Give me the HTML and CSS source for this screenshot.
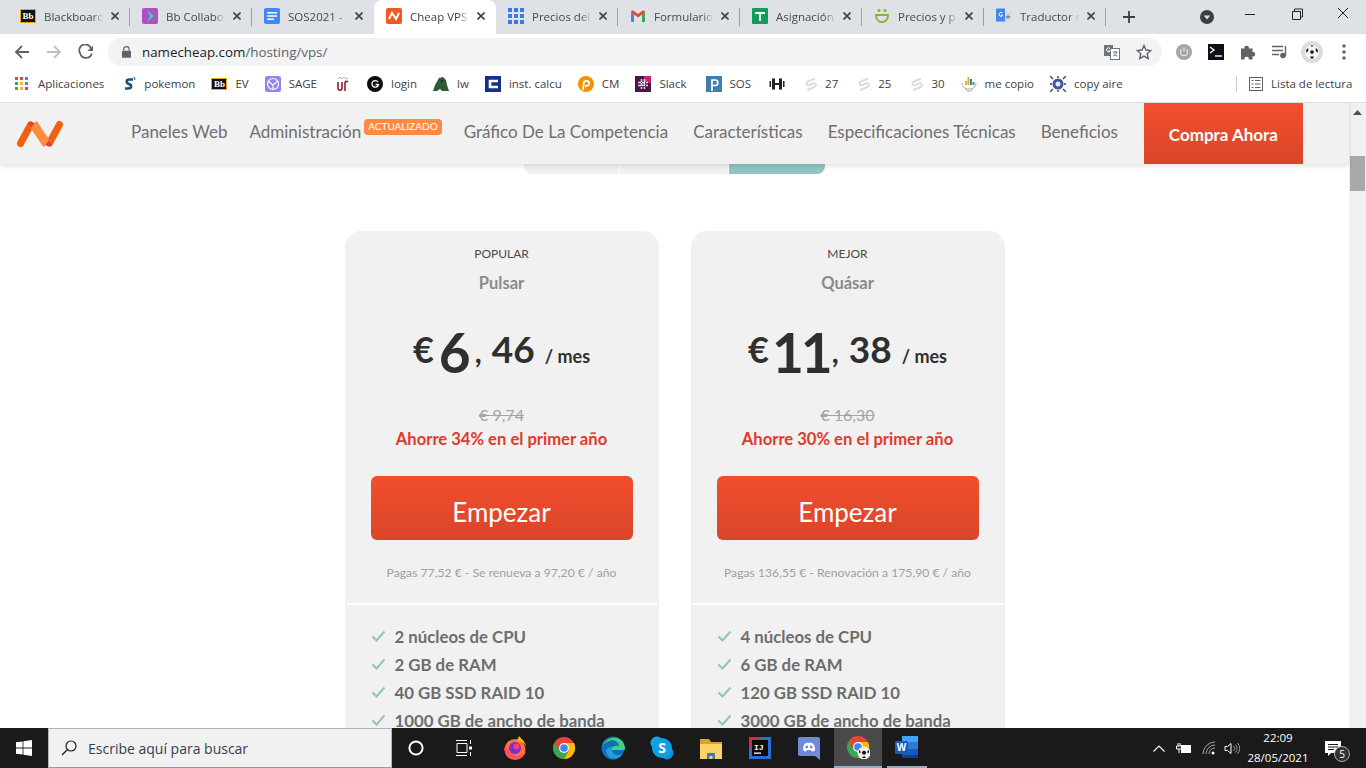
FILE: index.html
```html
<!DOCTYPE html>
<html lang="es">
<head>
<meta charset="utf-8">
<title>Cheap VPS</title>
<link rel="stylesheet" href="styles.css">
</head>
<body>
<div class="screen">
  <div class="tabstrip">
    <div class="tab sep"><svg class="fav" viewBox="0 0 16 16"><rect x=".5" y="1.5" width="15" height="13" fill="#111" stroke="#e8a917"/></svg><span class="bbmark">Bb</span><span class="title">Blackboard</span><svg class="x" viewBox="0 0 8 8"><path d="M.5.500l7 7M7.500.500l-7 7" stroke="#3c4043" stroke-width="1.600"/></svg></div>
    <div class="tab sep"><svg class="fav" viewBox="0 0 16 16"><rect width="16" height="16" rx="2" fill="#b04fc0"/><path d="M5 2l7 6-7 6 3-6z" fill="#35d6c0"/></svg><span class="title">Bb Collabo</span><svg class="x" viewBox="0 0 8 8"><path d="M.5.500l7 7M7.500.500l-7 7" stroke="#3c4043" stroke-width="1.600"/></svg></div>
    <div class="tab"><svg class="fav" viewBox="0 0 16 16"><rect width="16" height="16" rx="2" fill="#4285f4"/><path d="M3 4h10v1.600H3zM3 7.200h10v1.600H3zM3 10.400h7V12H3z" fill="#fff"/></svg><span class="title">SOS2021 -</span><svg class="x" viewBox="0 0 8 8"><path d="M.5.500l7 7M7.500.500l-7 7" stroke="#3c4043" stroke-width="1.600"/></svg></div>
    <div class="tab active"><svg class="fav" viewBox="0 0 16 16"><rect width="16" height="16" rx="2" fill="#ee5a1f"/><path d="M3 11l3-6 4 6 3-6" fill="none" stroke="#fff" stroke-width="2"/></svg><span class="title">Cheap VPS</span><svg class="x" viewBox="0 0 8 8"><path d="M.5.500l7 7M7.500.500l-7 7" stroke="#3c4043" stroke-width="1.600"/></svg></div>
    <div class="tab sep"><svg class="fav" viewBox="0 0 16 16"><path d="M0 0h4v4H0zM6 0h4v4H6zM12 0h4v4h-4zM0 6h4v4H0zM6 6h4v4H6zM12 6h4v4h-4zM0 12h4v4H0zM6 12h4v4H6zM12 12h4v4h-4z" fill="#3b78f0"/></svg><span class="title">Precios del</span><svg class="x" viewBox="0 0 8 8"><path d="M.5.500l7 7M7.500.500l-7 7" stroke="#3c4043" stroke-width="1.600"/></svg></div>
    <div class="tab sep"><svg class="fav" viewBox="0 0 16 16"><path d="M1 14V4l3 2v8H2a1 1 0 01-1-1z" fill="#4285f4"/><path d="M12 14V6l3-2v10h-3z" fill="#34a853"/><path d="M1 4c0-1.500 2-2 3-1l4 3 4-3c1-1 3-.5 3 1L12 6.500 8 9.500 4 6.500z" fill="#ea4335"/></svg><span class="title">Formulario</span><svg class="x" viewBox="0 0 8 8"><path d="M.5.500l7 7M7.500.500l-7 7" stroke="#3c4043" stroke-width="1.600"/></svg></div>
    <div class="tab sep"><svg class="fav" viewBox="0 0 16 16"><rect width="16" height="16" rx="1" fill="#0f9d58"/><path d="M3 4h10v2H9v7H7V6H3z" fill="#fff"/></svg><span class="title">Asignación</span><svg class="x" viewBox="0 0 8 8"><path d="M.5.500l7 7M7.500.500l-7 7" stroke="#3c4043" stroke-width="1.600"/></svg></div>
    <div class="tab sep"><svg class="fav" viewBox="0 0 16 16"><circle cx="5" cy="2.500" r="1.500" fill="#80b83a"/><circle cx="11" cy="2.500" r="1.500" fill="#80b83a"/><path d="M2 7h12c0 5-3 7-6 7s-6-2-6-7z" fill="none" stroke="#80b83a" stroke-width="2"/></svg><span class="title">Precios y p</span><svg class="x" viewBox="0 0 8 8"><path d="M.5.500l7 7M7.500.500l-7 7" stroke="#3c4043" stroke-width="1.600"/></svg></div>
    <div class="tab sep"><svg class="fav" viewBox="0 0 16 16"><rect x="6" y="4" width="10" height="11" fill="#dadce0"/><path d="M0 1.500a1 1 0 011-1h8v13H1a1 1 0 01-1-1z" fill="#4285f4"/><path d="M12 6l.8 2h2l-1.600 1.200.6 2-1.800-1.200-1.800 1.200.6-2L9.200 8h2z" fill="#80868b"/><path d="M6.500 5a2 2 0 10.300 2.300H4.800" fill="none" stroke="#fff"/></svg><span class="title">Traductor d</span><svg class="x" viewBox="0 0 8 8"><path d="M.5.500l7 7M7.500.500l-7 7" stroke="#3c4043" stroke-width="1.600"/></svg></div>
    <svg class="plus" viewBox="0 0 14 14"><path d="M7 1v12M1 7h12" stroke="#3c4043" stroke-width="1.800"/></svg>
    <div class="tabtools">
      <svg class="tabsearch" viewBox="0 0 14 14"><circle cx="7" cy="7" r="7" fill="#3c4043"/><path d="M3.800 5.500h6.400L7 9.500z" fill="#dee1e6"/></svg>
      <div class="wins">
        <svg class="win" viewBox="0 0 46 20"><path d="M17 10.500h10" stroke="#222" stroke-width="1"/></svg>
        <svg class="win" viewBox="0 0 46 20"><path d="M18.500 7.500h8v8h-8zM20.500 7.500v-2.500h8v8h-2" fill="none" stroke="#222"/></svg>
        <svg class="win" viewBox="0 0 46 20"><path d="M18 4l10 10M28 4L18 14" stroke="#222"/></svg>
      </div>
    </div>
  </div>

  <div class="toolbar">
    <svg class="nav-ic" viewBox="0 0 16 16"><path d="M15 8H2M8 2L2 8l6 6" fill="none" stroke="#5f6368" stroke-width="1.800"/></svg>
    <svg class="nav-ic" viewBox="0 0 16 16"><path d="M1 8h13M8 2l6 6-6 6" fill="none" stroke="#bdc1c6" stroke-width="1.800"/></svg>
    <svg class="nav-ic" viewBox="0 0 16 16"><path d="M13 4.500A6 6 0 102.200 9.500 6 6 0 0013.800 9.500" fill="none" stroke="#5f6368" stroke-width="1.800"/><path d="M15 1.500v5.500H9.500z" fill="#5f6368"/></svg>
    <div class="omnibox">
      <svg class="lock" viewBox="0 0 10 13"><path d="M2 5V3.500a3 3 0 016 0V5" fill="none" stroke="#5f6368" stroke-width="1.300"/><rect y="5" width="10" height="8" rx="1" fill="#5f6368"/></svg>
      <span class="url"><span class="host">namecheap.com</span>/hosting/vps/</span>
      <svg class="omni-tr" viewBox="0 0 16 16"><rect y="1" width="9" height="11" fill="#70757a"/><rect x="6.500" y="4.500" width="9" height="11" fill="#fff" stroke="#70757a"/><path d="M9 8h4.500M11 7v1M12.500 8c0 2-2 4-3.500 4M10 9.500c1 1.500 2 2 3.500 2.500" stroke="#70757a" fill="none"/><path d="M6 4.500a2 2 0 10.300 2.300H4.300" fill="none" stroke="#fff"/></svg>
      <svg class="omni-star" viewBox="0 0 16 16"><path d="M8 1.500l2 4.500 4.800.500-3.600 3.200 1 4.800L8 12.100l-4.200 2.400 1-4.800L1.200 6.500 6 6z" fill="none" stroke="#5f6368" stroke-width="1.400"/></svg>
    </div>
    <div class="ext">
      <svg class="ext-power" viewBox="0 0 16 16"><circle cx="8" cy="8" r="8" fill="#a6a6a6"/><path d="M5.500 5.500a3.600 3.600 0 105 0M8 3.500v4" fill="none" stroke="#e6e6e6" stroke-width="1.300"/></svg>
      <svg class="ext-term" viewBox="0 0 16 16"><rect width="16" height="16" fill="#0c0f16"/><path d="M2 3l4 3-4 3" fill="none" stroke="#fff" stroke-width="1.400"/><path d="M7 12h7" stroke="#fff" stroke-width="1.400"/></svg>
      <svg class="ext-puzzle" viewBox="0 0 16 16"><path d="M1 4.500h3.500a2.200 2.200 0 114.300 0H12.500V8a2.200 2.200 0 110 4.300V15.500H8.800a2.200 2.200 0 10-4.300 0H1z" fill="#5f6368"/></svg>
      <svg class="ext-music" viewBox="0 0 16 16"><path d="M0 2.500h11M0 6.500h11M0 10.500h7M13.500 2v9.500" fill="none" stroke="#5f6368" stroke-width="1.400"/><circle cx="11" cy="11.500" r="2.800" fill="#5f6368"/></svg>
      <svg class="avatar" viewBox="0 0 22 22"><circle cx="11" cy="11" r="11" fill="#dcdcdc"/><circle cx="11" cy="11" r="7" fill="#f6f6f6"/><path d="M11 9l2 1.500-.8 2.300H9.800L9 10.500zM5 9l2-2 .5 2.500L5.500 12zM17 9l-2-2-.5 2.500 2 2.500zM9 15.500h4l-1 2h-2zM9.500 4.500h3L11 6z" fill="#222"/></svg>
      <svg class="menu" viewBox="0 0 4 16"><circle cx="2" cy="2" r="1.700" fill="#5f6368"/><circle cx="2" cy="8" r="1.700" fill="#5f6368"/><circle cx="2" cy="14" r="1.700" fill="#5f6368"/></svg>
    </div>
  </div>

  <div class="bookmarks">
    <div class="bm apps"><svg class="bm-ic small" viewBox="0 0 13 13"><path d="M0 0h3v3H0z" fill="#ea4335"/><path d="M5 0h3v3H5z" fill="#ea4335"/><path d="M10 0h3v3h-3z" fill="#4285f4"/><path d="M0 5h3v3H0z" fill="#34a853"/><path d="M5 5h3v3H5z" fill="#fbbc05"/><path d="M10 5h3v3h-3z" fill="#4285f4"/><path d="M0 10h3v3H0z" fill="#34a853"/><path d="M5 10h3v3H5z" fill="#fbbc05"/><path d="M10 10h3v3h-3z" fill="#ea4335"/></svg><span>Aplicaciones</span></div>
    <div class="bm poke"><svg class="bm-ic" viewBox="0 0 13 16"><path d="M10 3.500H6C3 3.500 3 7 6 8s3 4.500-1 4.500H2" fill="none" stroke="#1e4f7a" stroke-width="2.600"/><path d="M11 1l1 3" stroke="#3a8fc0" stroke-width="1.500"/></svg><span>pokemon</span></div>
    <div class="bm"><svg class="bm-ic" viewBox="0 0 16 16"><rect x=".5" y="2.500" width="15" height="11" fill="#111" stroke="#e8a917"/></svg><span class="bbmark small-bb">Bb</span><span>EV</span></div>
    <div class="bm"><svg class="bm-ic" viewBox="0 0 16 16"><rect width="16" height="16" rx="2" fill="#8f86ee"/><circle cx="8" cy="8" r="5.500" fill="none" stroke="#fff" stroke-width="1.200"/><path d="M3 5l5 4 5-4M8 9v5" fill="none" stroke="#fff" stroke-width="1.200"/></svg><span>SAGE</span></div>
    <div class="bm push2"><svg class="bm-ic" viewBox="0 0 16 16"><path d="M3 3l2-2 2 2 2-2 2 2 2-1" fill="none" stroke="#c9a8a0"/><path d="M3 6v6c0 3 4 3 4 0V6M10 15V7c0-2 2-2 3-1" fill="none" stroke="#8c2030" stroke-width="1.600"/></svg></div>
    <div class="bm"><svg class="bm-ic" viewBox="0 0 16 16"><circle cx="8" cy="8" r="8" fill="#0b0b0b"/><path d="M11 6a3.300 3.300 0 10.500 2.500H8.500" fill="none" stroke="#fff" stroke-width="1.300"/></svg><span>login</span></div>
    <div class="bm"><svg class="bm-ic" viewBox="0 0 16 16"><path d="M0 15l2-6 4-7 4-1 3 3 1 5 2 6H9l-2-2-3 2z" fill="#2f5a35"/><circle cx="9" cy="5" r="1" fill="#123"/></svg><span>lw</span></div>
    <div class="bm"><svg class="bm-ic" viewBox="0 0 16 16"><rect width="16" height="16" fill="#14308e"/><path d="M13 5H5v6h8" fill="none" stroke="#fff" stroke-width="2.600"/></svg><span>inst. calcu</span></div>
    <div class="bm"><svg class="bm-ic" viewBox="0 0 16 16"><circle cx="8" cy="8" r="8" fill="#f39200"/><path d="M5 14L6 6c2-2 6-1 5 2s-3 2-4 2" fill="none" stroke="#fff" stroke-width="1.800"/></svg><span>CM</span></div>
    <div class="bm"><svg class="bm-ic" viewBox="0 0 16 16"><path d="M0 0h16v16H0z" fill="#4a154b"/><path d="M9 0h7v7H9z" fill="#c22a60"/><path d="M3 6.500h10M3 9.500h10M6.500 3v10M9.500 3v10" stroke="#e6d7e8" stroke-width="1.500" stroke-dasharray="3 1"/></svg><span>Slack</span></div>
    <div class="bm push4"><svg class="bm-ic" viewBox="0 0 16 16"><rect width="16" height="16" fill="#3f7fb0"/><path d="M6 15V4h3.500c3 0 3 5.500 0 5.500H6" fill="none" stroke="#fff" stroke-width="1.700"/></svg><span>SOS</span></div>
    <div class="bm push2"><svg class="bm-ic" viewBox="0 0 16 16"><path d="M.5 5H2v6H.5zM3 2.500h3v11H3zM6 7h4v2H6zM10 2.500h3v11h-3zM14 5h1.500v6H14z" fill="#222"/></svg></div>
    <div class="bm narrow push2"><svg class="bm-ic" viewBox="0 0 16 16"><path d="M12 2.500L5 5.500C2 7 4 10 6.500 9L10 7.500c3-1 4 2 1.500 3.500L4 14" fill="none" stroke="#dcdcdc" stroke-width="2"/></svg><span>27</span></div>
    <div class="bm narrow push2"><svg class="bm-ic" viewBox="0 0 16 16"><path d="M12 2.500L5 5.500C2 7 4 10 6.500 9L10 7.500c3-1 4 2 1.500 3.500L4 14" fill="none" stroke="#dcdcdc" stroke-width="2"/></svg><span>25</span></div>
    <div class="bm narrow push2"><svg class="bm-ic" viewBox="0 0 16 16"><path d="M12 2.500L5 5.500C2 7 4 10 6.500 9L10 7.500c3-1 4 2 1.500 3.500L4 14" fill="none" stroke="#dcdcdc" stroke-width="2"/></svg><span>30</span></div>
    <div class="bm"><svg class="bm-ic" viewBox="0 0 16 16"><path d="M5 9V5M7.500 9V1" stroke-width="2" stroke="#e8b020"/><path d="M10 9V3" stroke="#3a7fc0" stroke-width="2"/><path d="M12.500 9V6" stroke="#4aa050" stroke-width="2"/><path d="M1 7c0 8 14 8 14 0M4 13c3 3 5 3 8 0" fill="none" stroke="#a8a8a8"/></svg><span>me copio</span></div>
    <div class="bm"><svg class="bm-ic" viewBox="0 0 16 16"><circle cx="8" cy="8" r="5.500" fill="#3f55a5"/><circle cx="8" cy="8" r="2.500" fill="#e8ecf8"/><path d="M0 0l3 3M16 0l-3 3M0 16l3-3M16 16l-3-3M8 0v2M8 14v2M0 8h2M14 8h2" stroke="#444" stroke-width="1.400"/></svg><span>copy aire</span></div>
    <div class="reading">
      <svg class="read-ic" viewBox="0 0 14 14"><rect x=".5" y=".5" width="13" height="13" fill="none" stroke="#5f6368"/><path d="M2.500 3.500h2M2.500 7h2M2.500 10.500h2M6 3.500h5.500M6 7h5.500M6 10.500h5.500" stroke="#5f6368" stroke-width="1.200"/></svg>
      <span>Lista de lectura</span>
    </div>
  </div>

  <div class="viewport">
    <div class="page">
      <header class="site-head">
        <svg class="logo" viewBox="0 0 48 28"><path d="M4.500 23.500L14.500 5" stroke="#f15f10" stroke-width="7" stroke-linecap="round"/><path d="M43.500 4.500L33.500 23" stroke="#f15f10" stroke-width="7" stroke-linecap="round"/><path d="M17 3.500L31 24.500" stroke="#ff8c42" stroke-width="9"/><path d="M12 2.500c2-1.500 5-1 6.500 1L15 8z" fill="#d9482a"/><path d="M36 25.500c-2 1.500-5 1-6.500-1L33 20z" fill="#d9482a"/></svg>
        <nav class="nav">
          <a class="first">Paneles Web</a>
          <a>Administración<span class="badge">ACTUALIZADO</span></a>
          <a>Gráfico De La Competencia</a>
          <a>Características</a>
          <a>Especificaciones Técnicas</a>
          <a>Beneficios</a>
        </nav>
        <a class="buy">Compra Ahora</a>
      </header>
      <div class="subtabs"><span class="st st-a"></span><span class="st st-b"></span><span class="st st-c"></span></div>
      <main class="cards">
        <section class="card">
          <p class="kicker">POPULAR</p>
          <h2 class="plan">Pulsar</h2>
          <p class="price"><span class="cur">€</span><span class="big">6</span><span class="comma">,</span><span class="cents">46</span><span class="per">/ mes</span></p>
          <p class="old">€ 9,74</p>
          <p class="save">Ahorre 34% en el primer año</p>
          <a class="cta">Empezar</a>
          <p class="terms">Pagas 77,52 € - Se renueva a 97,20 € / año</p>
          <hr class="rule">
          <ul class="feats">
            <li><svg class="chk" viewBox="0 0 14 12"><path d="M1 6.500l4 4L13 1.500" fill="none" stroke="#8fc4bf" stroke-width="2"/></svg>2 núcleos de CPU</li>
            <li><svg class="chk" viewBox="0 0 14 12"><path d="M1 6.500l4 4L13 1.500" fill="none" stroke="#8fc4bf" stroke-width="2"/></svg>2 GB de RAM</li>
            <li><svg class="chk" viewBox="0 0 14 12"><path d="M1 6.500l4 4L13 1.500" fill="none" stroke="#8fc4bf" stroke-width="2"/></svg>40 GB SSD RAID 10</li>
            <li><svg class="chk" viewBox="0 0 14 12"><path d="M1 6.500l4 4L13 1.500" fill="none" stroke="#8fc4bf" stroke-width="2"/></svg>1000 GB de ancho de banda</li>
          </ul>
        </section>
        <section class="card">
          <p class="kicker">MEJOR</p>
          <h2 class="plan">Quásar</h2>
          <p class="price"><span class="cur">€</span><span class="big tight">11</span><span class="comma">,</span><span class="cents">38</span><span class="per">/ mes</span></p>
          <p class="old">€ 16,30</p>
          <p class="save">Ahorre 30% en el primer año</p>
          <a class="cta">Empezar</a>
          <p class="terms">Pagas 136,55 € - Renovación a 175,90 € / año</p>
          <hr class="rule">
          <ul class="feats">
            <li><svg class="chk" viewBox="0 0 14 12"><path d="M1 6.500l4 4L13 1.500" fill="none" stroke="#8fc4bf" stroke-width="2"/></svg>4 núcleos de CPU</li>
            <li><svg class="chk" viewBox="0 0 14 12"><path d="M1 6.500l4 4L13 1.500" fill="none" stroke="#8fc4bf" stroke-width="2"/></svg>6 GB de RAM</li>
            <li><svg class="chk" viewBox="0 0 14 12"><path d="M1 6.500l4 4L13 1.500" fill="none" stroke="#8fc4bf" stroke-width="2"/></svg>120 GB SSD RAID 10</li>
            <li><svg class="chk" viewBox="0 0 14 12"><path d="M1 6.500l4 4L13 1.500" fill="none" stroke="#8fc4bf" stroke-width="2"/></svg>3000 GB de ancho de banda</li>
          </ul>
        </section>
      </main>
    </div>
    <div class="scrollbar"><svg class="sb-up" viewBox="0 0 9 5"><path d="M4.500 0L9 5H0z" fill="#505050"/></svg><div class="sb-thumb"></div></div>
  </div>

  <footer class="taskbar">
    <svg class="start" viewBox="0 0 16 16"><path d="M0 2.300l6.600-.9v6.200H0zM7.400 1.300L16 0v7.600H7.400zM0 8.400h6.600v6.200L0 13.700zM7.400 8.400H16V16l-8.600-1.300z" fill="#fff"/></svg>
    <div class="search">
      <svg class="s-ic" viewBox="0 0 16 16"><circle cx="10" cy="6" r="5" fill="none" stroke="#222" stroke-width="1.200"/><path d="M6.500 9.500L1 15" stroke="#222" stroke-width="1.400"/></svg>
      <span>Escribe aquí para buscar</span>
    </div>
    <div class="tb-btn"><svg class="tb-ic-s" viewBox="0 0 16 16"><circle cx="8" cy="8" r="6.600" fill="none" stroke="#fff" stroke-width="2"/></svg></div>
    <div class="tb-btn"><svg class="tb-ic-s" viewBox="0 0 16 16"><path d="M1 3.500h10v9H1zM0 .5h11M0 15.500h11M14.500 0v4M14.500 12v4" fill="none" stroke="#fff"/><path d="M13 6.500h3v3h-3z" fill="#fff"/></svg></div>
    <div class="apps-row">
      <div class="tb-app"><svg class="tb-ic" viewBox="0 0 24 24"><circle cx="12" cy="13.500" r="10.500" fill="#ff7139"/><path d="M16 0c2 3 7 5 7 12 0-4-4-7-9-7z" fill="#ffb21a"/><path d="M1 12c1 8 8 12 14 11 4-1 7-4 8-8-3 5-9 6-13 4C7 17 6 14 7 12z" fill="#ff4f5e"/><circle cx="12" cy="12" r="6" fill="#7a2fd0"/><circle cx="13.500" cy="10.500" r="3" fill="#ff3d6e"/></svg></div>
      <div class="tb-app"><svg class="tb-ic" viewBox="0 0 24 24"><circle cx="12" cy="12" r="11" fill="#ea4335"/><path d="M12 7h10a11 11 0 01-10 16l5-9z" fill="#fbbc05"/><path d="M2.500 6.500A11 11 0 0012 23l5-9-5 3-5-3z" fill="#34a853"/><circle cx="12" cy="12" r="5" fill="#fff"/><circle cx="12" cy="12" r="3.800" fill="#4285f4"/></svg></div>
      <div class="tb-app"><svg class="tb-ic" viewBox="0 0 24 24"><circle cx="12" cy="12" r="11.500" fill="#0f6fb5"/><path d="M1 11C3 3 14-2 21 5c3 3 3 7 3 9H10c0-4 5-5 8-4 0-4-5-7-10-5-3 1-6 3-7 6z" fill="#3fd08f"/><path d="M11 15c1 4 6 5 10 3-3 5-9 6-13 3-2-2-3-4-3-7 2-3 5-4 7-3-1 1-1 2-1 4z" fill="#1f9fe0"/></svg></div>
      <div class="tb-app"><svg class="tb-ic" viewBox="0 0 24 24"><circle cx="7" cy="7" r="6.500" fill="#11a7e6"/><circle cx="17" cy="17" r="6.500" fill="#0d8fd6"/><circle cx="12" cy="12" r="10" fill="#0fa0e3"/><text class="sky" x="12" y="17" text-anchor="middle">S</text></svg></div>
      <div class="tb-app"><svg class="tb-ic" viewBox="0 0 24 24"><path d="M1 3h9l2 3h11v17H1z" fill="#d9a520"/><path d="M1 8h22v15H1z" fill="#fbd56a"/><path d="M8 17h8v6h-2.500v-3h-3v3H8z" fill="#2f80c8"/></svg></div>
      <div class="tb-app"><svg class="tb-ic" viewBox="0 0 24 24"><rect x="1" y="1" width="22" height="22" fill="#2870d8"/><path d="M1 1h13L1 14z" fill="#d6264e"/><rect x="4" y="4" width="16" height="16" fill="#0a0a0a"/><rect x="6" y="16.500" width="7" height="1.300" fill="#fff"/><text class="ij" x="6" y="14">IJ</text></svg></div>
      <div class="tb-app"><svg class="tb-ic" viewBox="0 0 24 24"><path d="M3 1h18a2 2 0 012 2v21l-5-4H3a2 2 0 01-2-2V3a2 2 0 012-2z" fill="#7289da"/><path d="M6 14c0-4 1-6 3-7 2-.5 4-.5 6 0 2 1 3 3 3 7-1 1-2 1.500-3 1.500l-1-1.500h-4l-1 1.500C8 15.500 7 15 6 14z" fill="#fff"/><circle cx="9.800" cy="11" r="1.400" fill="#7289da"/><circle cx="14.200" cy="11" r="1.400" fill="#7289da"/></svg></div>
      <div class="tb-app current"><svg class="tb-ic" viewBox="0 0 24 24"><circle cx="12" cy="12" r="11" fill="#ea4335"/><path d="M12 7h10a11 11 0 01-10 16l5-9z" fill="#fbbc05"/><path d="M2.500 6.500A11 11 0 0012 23l5-9-5 3-5-3z" fill="#34a853"/><circle cx="12" cy="12" r="5" fill="#fff"/><circle cx="12" cy="12" r="3.800" fill="#4285f4"/><circle cx="18" cy="18" r="6.500" fill="#f2f2f2"/><path d="M18 15.500l2.200 1.600-.8 2.500h-2.800l-.8-2.500zM13 15l1.500 1 0 2.500-1.500-1zM23 15l-1.500 1 0 2.500 1.500-1zM16 23l1-1.500h2l1 1.500z" fill="#111"/></svg></div>
      <div class="tb-app running"><svg class="tb-ic" viewBox="0 0 24 24"><path d="M7 1h16v6H7z" fill="#41a5ee"/><path d="M7 7h16v7H7z" fill="#2b7cd3"/><path d="M7 14h16v6H7z" fill="#185abd"/><path d="M7 20h16v3H7z" fill="#103f91"/><rect y="6" width="13" height="13" rx="1" fill="#1a5bbf"/><text class="wd" x="6.500" y="16" text-anchor="middle">W</text></svg></div>
    </div>
    <div class="tray">
      <svg class="t-chev" viewBox="0 0 12 7"><path d="M.5 6.500L6 1l5.500 5.500" fill="none" stroke="#fff" stroke-width="1.100"/></svg>
      <svg class="t-batt" viewBox="0 0 16 11"><path d="M3 0v3M5 0v3M1.500 3h5v3h-5zM4 6v4" fill="none" stroke="#fff"/><rect x="6.500" y="2.500" width="9" height="7" fill="#fff" stroke="#fff"/></svg>
      <svg class="t-wifi" viewBox="0 0 14 14"><path d="M1 13A12 12 0 0113 1M4 13a9 9 0 019-9M7 13a6 6 0 016-6" fill="none" stroke="#aaa"/><circle cx="11" cy="12" r="1.500" fill="#fff"/></svg>
      <svg class="t-vol" viewBox="0 0 16 13"><path d="M1 4.500h2.500L7 1.500v10L3.500 8.500H1z" fill="none" stroke="#fff"/><path d="M9.500 4a3.500 3.500 0 010 5M11.500 2.500a6 6 0 010 8M13.500 1a8 8 0 010 11" fill="none" stroke="#999"/></svg>
      <div class="clock"><span>22:09</span><span>28/05/2021</span></div>
      <div class="notif"><svg class="n-ic" viewBox="0 0 16 15"><path d="M0 0h16v12H6l-3 3v-3H0z" fill="#fff"/><path d="M3 3.500h10M3 6h10M3 8.500h6" stroke="#1b1b1b"/></svg><span class="n-badge">5</span></div>
    </div>
  </footer>
</div>
</body>
</html>
```
FILE: styles.css
```css
* { box-sizing: border-box; }
html, body { margin: 0; padding: 0; height: 100%; overflow: hidden; }
body { font-family: "Open Sans", "Liberation Sans", sans-serif; background: #fff; }
p, h2, ul { margin: 0; padding: 0; }
.screen { width: 1366px; height: 768px; display: flex; flex-direction: column; overflow: hidden; }

/* tab strip */
.tabstrip { height: 34px; background: #dee1e6; display: flex; align-items: stretch; padding-left: 8px; flex: none; position: relative; }
.tab { width: 122px; display: flex; align-items: center; padding: 0 0 2px 12px; position: relative; font-size: 11.5px; color: #45494d; }
.tab.sep::after { content: ""; position: absolute; right: 0; top: 8px; height: 18px; width: 1px; background: #9aa0a6; }
.tab.active { background: #fff; border-radius: 8px 8px 0 0; color: #3c4043; }
.fav { width: 16px; height: 16px; flex: none; }
.bbmark { position: absolute; left: 13px; width: 14px; text-align: center; font: 700 9px "Liberation Serif", serif; color: #fff; }
.title { width: 62px; margin-left: 8px; white-space: nowrap; overflow: hidden; flex: none; -webkit-mask-image: linear-gradient(90deg, #000 78%, transparent 96%); mask-image: linear-gradient(90deg, #000 78%, transparent 96%); }
.x { width: 8px; height: 8px; margin-left: 5px; flex: none; }
.plus { width: 14px; height: 14px; align-self: center; margin-left: 16px; flex: none; }
.tabtools { display: flex; margin-left: auto; align-items: flex-start; }
.tabsearch { width: 14px; height: 14px; margin: 10px 0 0; flex: none; }
.wins { display: flex; margin-left: 14px; }
.win { width: 46px; height: 20px; margin-top: 4px; display: block; }

/* toolbar */
.toolbar { height: 32px; background: #fff; display: flex; align-items: center; flex: none; padding-top: 4px; padding-left: 14px; }
.nav-ic { width: 16px; height: 16px; margin-right: 16px; flex: none; }
.nav-ic:nth-child(3) { margin-right: 14px; }
.omnibox { width: 1054px; height: 28px; background: #f1f3f4; border-radius: 14px; display: flex; align-items: center; padding-left: 14px; flex: none; }
.lock { width: 9px; height: 12px; flex: none; }
.url { margin-left: 11px; font-size: 13.35px; color: #5f6368; }
.host { color: #202124; }
.omni-tr { width: 16px; height: 16px; margin-left: auto; }
.omni-star { width: 16px; height: 16px; margin: 0 10px 0 16px; }
.ext { display: flex; align-items: center; margin-left: 14px; flex: none; }
.ext-power { width: 16px; height: 16px; }
.ext-term { width: 16px; height: 16px; margin-left: 16px; }
.ext-puzzle { width: 16px; height: 16px; margin-left: 16px; }
.ext-music { width: 16px; height: 16px; margin-left: 16px; }
.avatar { width: 22px; height: 22px; margin-left: 13px; }
.menu { width: 4px; height: 16px; margin-left: 19px; }

/* bookmarks */
.bookmarks { height: 37px; background: #fff; border-bottom: 1px solid #dadce0; display: flex; align-items: center; padding-left: 15px; flex: none; font-size: 11.5px; color: #3c4043; gap: 16px; padding-bottom: 1px; }
.bm { display: flex; align-items: center; gap: 8px; position: relative; white-space: nowrap; }
.bm .bbmark { left: 1px; }
.bm-ic { width: 16px; height: 16px; flex: none; }
.bm-ic.small { width: 13px; height: 13px; margin-right: 2px; }
.apps { margin-right: 3px; }
.poke .bm-ic { width: 13px; }
.narrow { gap: 6px; }
.push2 { margin-left: 2px; }
.push4 { margin-left: 3px; }
.reading { margin-left: auto; display: flex; align-items: center; gap: 8px; border-left: 1px solid #ccc; height: 16px; padding: 0 14px 0 12px; width: 130px; }
.read-ic { width: 14px; height: 14px; flex: none; }
.reading span { white-space: nowrap; }

/* page */
.viewport { flex: 1; display: flex; min-height: 0; overflow: hidden; }
.page { flex: 1; min-width: 0; background: #fff; font-family: Lato, "Open Sans", sans-serif; }
.site-head { height: 61px; background: #f1f1f1; display: flex; align-items: center; box-shadow: 0 2px 5px rgba(0,0,0,.12); padding-left: 16px; position: relative; z-index: 2; }
.logo { width: 48px; height: 28px; flex: none; }
.nav { display: flex; margin-left: 67px; font-size: 17px; color: #6f6f6f; gap: 25px; align-items: center; margin-top: -5px; }
.nav a { white-space: nowrap; position: relative; }
.nav .first { margin-right: -3px; }
.badge { display: inline-block; position: relative; top: -3px; background: #fb8a45; color: #fff; font-size: 10px; border-radius: 4px; padding: 0 4px; height: 16px; line-height: 15px; margin-left: 3px; margin-right: -3px; vertical-align: 5px; }
.buy { margin-left: 26px; width: 159px; height: 61px; background: linear-gradient(#f24e2d, #da4529); color: #fff; font-size: 17px; font-weight: 700; display: flex; align-items: center; justify-content: center; padding-top: 2px; flex: none; }
.subtabs { display: flex; height: 10px; gap: 1px; width: 301px; margin-left: 524px; }
.st { display: block; height: 10px; background: #f1f1f1; }
.st-a { width: 95px; border-radius: 0 0 0 8px; }
.st-b { width: 109px; }
.st-c { width: 96px; background: #92c4c0; border-radius: 0 0 8px 0; }
.cards { display: flex; justify-content: center; gap: 32px; margin-top: 57px; }
.card { width: 314px; background: #f1f1f1; border-radius: 16px 16px 0 0; text-align: center; padding-top: 14px; height: 560px; }
.kicker { font-size: 12px; line-height: 17px; color: #4a4a4a; }
.plan { font-size: 16.5px; line-height: 20px; margin-top: 11px; color: #8a8a8a; font-weight: 700; }
.price { margin-top: 26px; height: 60px; line-height: 60px; color: #2f2f2f; white-space: nowrap; font-weight: 700; }
.cur { font-size: 36px; }
.big { font-size: 55px; vertical-align: -10px; margin-left: 5px; }
.big.tight { letter-spacing: -3px; margin-left: 3px; }
.comma { font-size: 30px; margin-left: 4px; }
.tight + .comma { margin-left: 2px; }
.cents { font-size: 37px; margin-left: 10px; }
.per { font-size: 18px; margin-left: 10px; }
.old { margin-top: 26px; font-size: 16px; line-height: 20px; color: #a4a4a4; text-decoration: line-through; }
.save { margin-top: 4px; font-size: 16.6px; line-height: 20px; font-weight: 700; color: #e2392a; }
.cta { display: block; margin: 27px 26px 0; height: 64px; line-height: 73px; border-radius: 6px; background: linear-gradient(#f24e2d, #da4529); color: #fff; font-size: 26px; font-weight: 400; }
.terms { margin-top: 24px; font-size: 12.2px; line-height: 18px; color: #a0a0a0; }
.rule { border: 0; height: 2px; background: #fff; margin: 21px 2px 0; }
.feats { list-style: none; text-align: left; padding: 17px 0 0 26px; }
.feats li { display: flex; align-items: center; height: 28px; font-size: 16.8px; font-weight: 700; color: #6d6d6d; white-space: nowrap; }
.chk { width: 15px; height: 12px; margin-right: 9px; flex: none; }
.scrollbar { width: 17px; background: #f1f1f1; flex: none; display: flex; flex-direction: column; align-items: center; padding-top: 7px; }
.sb-up { width: 9px; height: 5px; flex: none; }
.sb-thumb { width: 15px; height: 35px; margin-top: 41px; background: #a8a8a8; }

/* taskbar */
.taskbar { height: 40px; background: #1a1a1a; display: flex; align-items: center; flex: none; position: relative; }
.start { width: 16px; height: 16px; margin-left: 16px; flex: none; }
.search { width: 344px; height: 40px; margin-left: 16px; background: #f1f1f1; border: 1px solid #b5b5b5; border-bottom-color: #999; display: flex; align-items: center; padding-left: 12px; font-size: 14px; color: #333f4c; flex: none; font-family: "Open Sans", sans-serif; }
.s-ic { width: 16px; height: 16px; margin-right: 11px; flex: none; }
.tb-btn { width: 48px; height: 40px; display: flex; align-items: center; justify-content: center; flex: none; }
.tb-ic-s { width: 16px; height: 16px; }
.apps-row { display: flex; gap: 1px; margin-left: 3px; flex: none; }
.tb-app { width: 48px; height: 40px; display: flex; align-items: center; justify-content: center; position: relative; }
.tb-ic { width: 24px; height: 24px; }
.tb-app.current { background: #4a4a4a; border-bottom: 2px solid #8fb0c8; }
.tb-app.running { border-bottom: 2px solid #8fb0c8; width: 40px; margin-left: 4px; }
.sky { font: 700 14px "Open Sans", sans-serif; fill: #fff; }
.ij { font: 700 8px "Liberation Mono", monospace; fill: #fff; }
.wd { font: 700 10px "Liberation Sans", sans-serif; fill: #fff; }
.tray { display: flex; align-items: center; margin-left: auto; color: #fff; position: relative; flex: none; height: 40px; }
.t-chev { width: 12px; height: 7px; }
.t-batt { width: 16px; height: 11px; margin-left: 10px; }
.t-wifi { width: 14px; height: 14px; margin-left: 11px; }
.t-vol { width: 16px; height: 13px; margin-left: 8px; }
.clock { width: 76px; margin-left: 0; display: flex; flex-direction: column; align-items: center; font-size: 11.5px; line-height: 20px; font-family: "Open Sans", sans-serif; }
.notif { width: 36px; margin-left: -1px; margin-right: 15px; position: relative; height: 40px; display: flex; align-items: center; justify-content: center; }
.n-ic { width: 16px; height: 15px; }
.n-badge { position: absolute; left: 19px; top: 18px; width: 16px; height: 16px; border-radius: 50%; border: 1px solid #aaa; background: #333; font-size: 10px; line-height: 14px; text-align: center; color: #fff; }
```
